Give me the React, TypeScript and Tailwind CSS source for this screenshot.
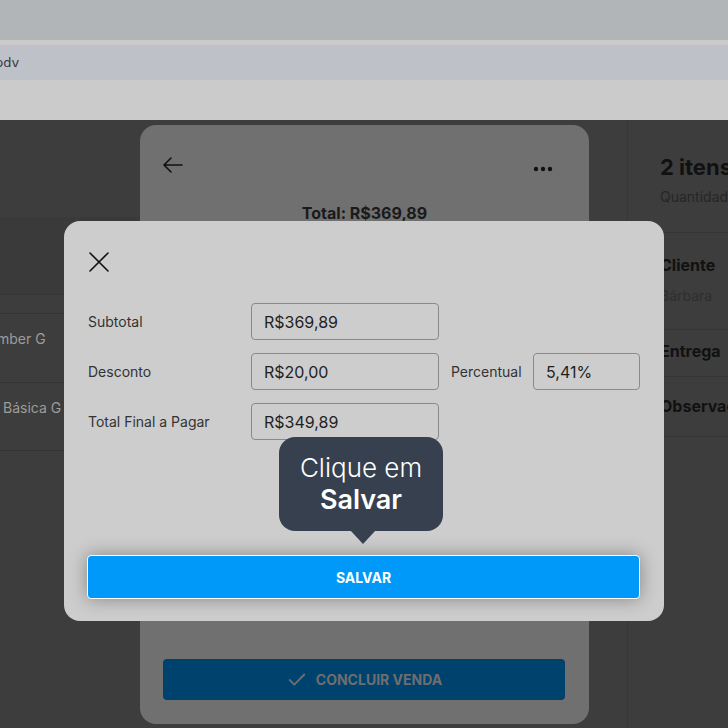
import { Check } from "lucide-react";

const Field = ({ value, w = "w-[188px]" }: { value: string; w?: string }) => (
  <div
    className={`${w} h-[37px] flex items-center px-3 rounded border border-[#8a8a8a] text-[16px] text-[#1f1f1f]`}>
    {value}
  </div>
);

const App = (): JSX.Element => {
  return (
    <div className="relative w-[728px] h-[728px] overflow-hidden bg-[#3d3d3d] font-['Inter',sans-serif]">
      {/* browser chrome */}
      <div className="h-[40px] bg-[#b1b5b8]" />
      <div className="h-[5px] bg-[#cacaca]" />
      <div className="h-[35px] bg-[#bec1c8] flex items-center">
        <span className="ml-[-5px] text-[13px] text-[#3a3a3a] font-['DejaVu_Sans',sans-serif]">
          pdv
        </span>
      </div>
      <div className="h-[40px] bg-[#cbcbcb]" />

      {/* page behind the overlay */}
      <div className="flex h-[608px]">
        <div className="w-[140px] shrink-0 flex flex-col overflow-hidden">
          <div className="h-[97px] bg-[#3d3d3d]" />
          <div className="h-[78px] bg-[#3a3a3a] border-b border-[#353535]" />
          <div className="h-[19px] border-b border-[#353535]" />
          <div className="h-[69px] border-b border-[#353535] pt-[14px] text-[14px] text-[#9c9c9c] whitespace-nowrap">
            <span className="ml-[-3px]">mber G</span>
          </div>
          <div className="h-[68px] border-b border-[#353535] pt-[14px] text-[14px] text-[#9c9c9c] whitespace-nowrap">
            <span className="ml-[3px]">Básica G</span>
          </div>
        </div>

        <div className="w-[449px] shrink-0 mt-[5px] h-[599px] rounded-2xl bg-[#707070] flex flex-col px-[23px]">
          <div className="flex items-center justify-between mt-[30px] h-[20px]">
            <svg width="20" height="16" viewBox="0 0 20 16" fill="none" stroke="#111" strokeWidth="1.6" strokeLinecap="round" strokeLinejoin="round">
              <path d="M19 8H1.5M8 1L1 8l7 7" />
            </svg>
            <svg width="20" height="6" viewBox="0 0 20 6" fill="#111" className="mr-[13px] mt-[8px]">
              <circle cx="3" cy="3" r="2.2" />
              <circle cx="10" cy="3" r="2.2" />
              <circle cx="17" cy="3" r="2.2" />
            </svg>
          </div>
          <div className="mt-[26px] text-center font-bold text-[16px] text-[#1a1a1a]">
            Total: R$369,89
          </div>
          <div className="flex-1" />
          <div className="mb-[24px] h-[41px] w-[402px] rounded bg-[#00426e] flex items-center justify-center gap-2 text-[#6e6e6e] font-bold text-[14px]">
            <Check size={22} strokeWidth={2} />
            CONCLUIR VENDA
          </div>
        </div>

        <div className="w-[38px] shrink-0" />
        <div className="flex-1 min-w-0 overflow-hidden border-l border-[#363636] flex flex-col whitespace-nowrap">
          <div className="pl-[32px] pt-[32px] h-[113px] border-b border-[#363636]">
            <div className="text-[22px] font-bold text-[#111] leading-[30px]">2 itens</div>
            <div className="text-[14px] text-[#262626] mt-[4px]">Quantidade</div>
          </div>
          <div className="pl-[32px] h-[97px] border-b border-[#363636] pt-[20px]">
            <div className="text-[16px] font-bold text-[#111]">Cliente</div>
            <div className="text-[14px] text-[#2e2e2e] mt-[8px]">Bárbara</div>
          </div>
          <div className="pl-[32px] h-[47px] border-b border-[#363636] pt-[9px]">
            <div className="text-[16px] font-bold text-[#111]">Entrega</div>
          </div>
          <div className="pl-[32px] h-[60px] border-b border-[#363636] pt-[17px]">
            <div className="text-[16px] font-bold text-[#111]">Observação</div>
          </div>
        </div>
      </div>

      {/* modal */}
      <div className="absolute left-[64px] top-[221px] w-[600px] h-[400px] rounded-2xl bg-[#cdcdcd] px-[23px] pt-[31px]">
        <svg width="20" height="20" viewBox="0 0 20 20" stroke="#111" strokeWidth="1.6" strokeLinecap="round" className="ml-[2px]">
          <path d="M1 1l18 18M19 1L1 19" />
        </svg>
        <div className="mt-[31px] flex flex-col gap-[13px] text-[14px] text-[#333]">
          <div className="flex items-center">
            <span className="w-[164px] pl-[1px]">Subtotal</span>
            <Field value="R$369,89" />
          </div>
          <div className="flex items-center">
            <span className="w-[164px] pl-[1px]">Desconto</span>
            <Field value="R$20,00" />
            <span className="ml-[12px] w-[82px]">Percentual</span>
            <Field value="5,41%" w="w-[107px]" />
          </div>
          <div className="flex items-center">
            <span className="w-[164px] pl-[1px]">Total Final a Pagar</span>
            <Field value="R$349,89" />
          </div>
        </div>
        <div className="mt-[115px] h-[44px] w-[553px] rounded border border-white bg-[#0099fa] shadow-[0_0_18px_rgba(0,0,0,0.35)] flex items-center justify-center text-white font-bold text-[14px]">
          SALVAR
        </div>

        <div className="absolute left-[215px] top-[216px] w-[164px] h-[94px] rounded-2xl bg-[#36404f] flex flex-col items-center justify-center text-white">
          <span className="text-[26px] font-light leading-[32px]">Clique em</span>
          <span className="text-[27px] font-semibold leading-[32px]">Salvar</span>
          <div className="absolute bottom-[-13px] left-[71px] w-0 h-0 border-l-[13px] border-r-[13px] border-t-[14px] border-l-transparent border-r-transparent border-t-[#36404f]" />
        </div>
      </div>
    </div>
  );
};

export default App;
